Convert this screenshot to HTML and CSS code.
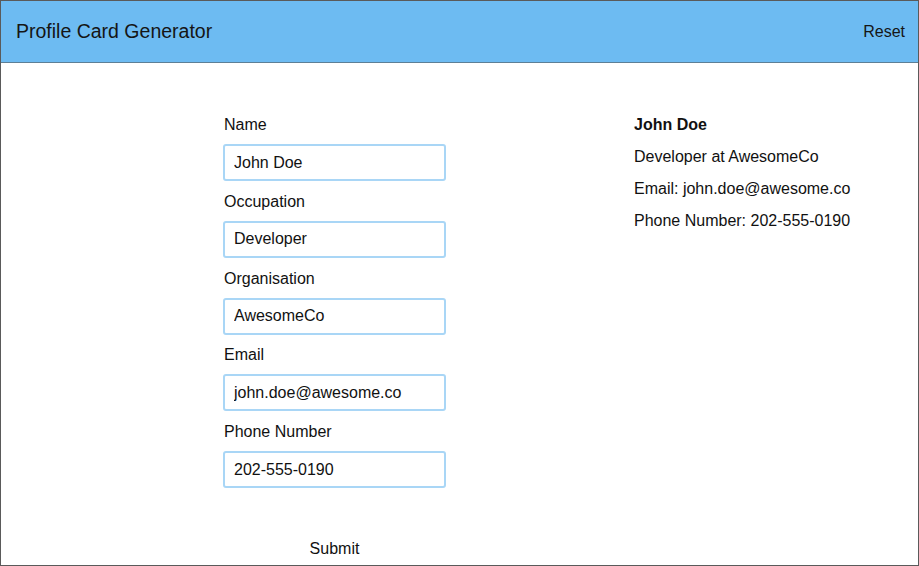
FILE: index.html
```html
<!DOCTYPE html>
<html>
<head>
<meta charset="utf-8">
<link rel="stylesheet" href="styles.css">
</head>
<body>
<div class="frame">
  <header class="topbar">
    <h1 class="title">Profile Card Generator</h1>
    <button class="reset">Reset</button>
  </header>
  <main class="content">
    <form class="form">
      <label class="label">Name</label>
      <input class="field" value="John Doe">
      <label class="label">Occupation</label>
      <input class="field" value="Developer">
      <label class="label">Organisation</label>
      <input class="field" value="AwesomeCo">
      <label class="label">Email</label>
      <input class="field" value="john.doe@awesome.co">
      <label class="label">Phone Number</label>
      <input class="field" value="202-555-0190">
      <button type="button" class="submit">Submit</button>
    </form>
    <section class="card">
      <p class="card-name">John Doe</p>
      <p class="card-line">Developer at AwesomeCo</p>
      <p class="card-line">Email: john.doe@awesome.co</p>
      <p class="card-line">Phone Number: 202-555-0190</p>
    </section>
  </main>
</div>
</body>
</html>
```
FILE: styles.css
```css
* { box-sizing: border-box; }
html, body { margin: 0; padding: 0; }
body {
  font-family: "Liberation Sans", Arial, sans-serif;
  color: #111;
  background: #fff;
}
.frame {
  width: 919px;
  height: 566px;
  border: 1px solid #5a5a5a;
  overflow: hidden;
}
.topbar {
  height: 62px;
  background: #6dbbf2;
  border-bottom: 1px solid #5d7f96;
  display: flex;
  align-items: center;
  justify-content: space-between;
  padding: 0 13px 0 15px;
}
.title {
  margin: 0;
  font-size: 19.5px;
  font-weight: normal;
  color: #151515;
}
.reset {
  font: inherit;
  font-size: 16px;
  background: none;
  border: none;
  color: #151515;
  padding: 0;
}
.content {
  display: flex;
  padding: 52px 0 0 222px;
}
.form {
  width: 223px;
  display: flex;
  flex-direction: column;
}
.label {
  font-size: 16px;
  line-height: 18px;
  height: 18px;
  margin: 1px 0 10px 1px;
}
.field {
  width: 223px;
  height: 37px;
  border: 2px solid #a9d6f6;
  border-radius: 3px;
  font: inherit;
  font-size: 16px;
  padding: 0 9px;
  margin-bottom: 10.75px;
  color: #111;
}
.submit {
  margin-top: 41px;
  align-self: center;
  background: none;
  border: none;
  font: inherit;
  font-size: 16px;
  color: #111;
  padding: 0;
}
.card {
  margin-left: 188px;
  padding-top: 1px;
}
.card p {
  margin: 0 0 14px;
  font-size: 16px;
  line-height: 18px;
}
.card-name { font-weight: bold; }
```
